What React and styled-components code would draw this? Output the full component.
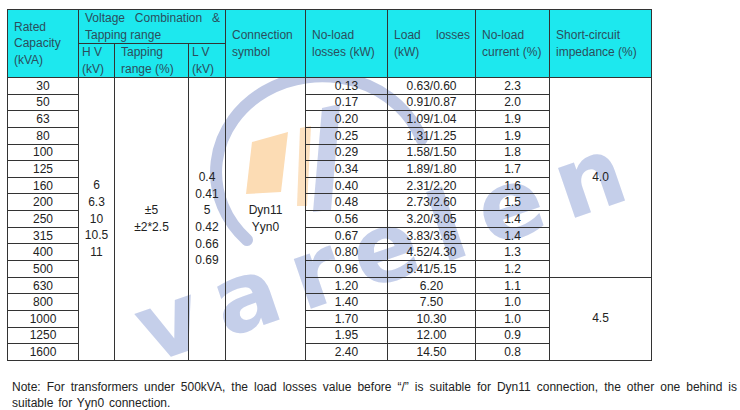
import React from 'react';
import styled, { createGlobalStyle } from 'styled-components';

const GlobalStyle = createGlobalStyle`
  html, body {
    margin: 0;
    padding: 0;
    background: #fff;
  }
  body {
    font-family: "Liberation Sans", Arial, sans-serif;
  }
`;

const Page = styled.div`
  position: relative;
  width: 740px;
  height: 410px;
  overflow: hidden;
  padding: 9px 0 0 7px;
  box-sizing: border-box;
`;

const Watermark = styled.svg`
  position: absolute;
  left: 0;
  top: 0;
  width: 740px;
  height: 410px;
  z-index: 0;
  pointer-events: none;
  opacity: 0.85;
`;

const Table = styled.table`
  position: relative;
  z-index: 1;
  border-collapse: collapse;
  table-layout: fixed;
  width: 644px;
  font-size: 12px;
  color: #222;
`;

const HeadRow = styled.tr`
  height: ${p => p.$h}px;
`;

const BodyRow = styled.tr`
  height: 16.65px;
`;

const Th = styled.th`
  background: #1de8ee;
  color: #2b4e5c;
  font-weight: normal;
  border: 1px solid #333;
  padding: ${p => (p.$narrow ? '0 2px 0 3px' : '0 5px 0 6px')};
  text-align: ${p => (p.$narrow ? 'left' : 'justify')};
  text-align-last: left;
  vertical-align: middle;
  line-height: 16.5px;
`;

const Td = styled.td`
  border: 1px solid #333;
  padding: 0;
  text-align: center;
  vertical-align: middle;
  line-height: 14px;
  white-space: nowrap;
`;

const Merged = styled.td`
  border: 1px solid #333;
  padding: 0;
  text-align: center;
  vertical-align: middle;
  line-height: 16.6px;
`;

const Line = styled.div``;

const Note = styled.p`
  margin: 18px 0 0 5px;
  width: 725px;
  font-size: 12px;
  line-height: 16px;
  word-spacing: 1.5px;
  color: #222;
  text-align: justify;
`;

const rows = [
  ['30', '0.13', '0.63/0.60', '2.3'],
  ['50', '0.17', '0.91/0.87', '2.0'],
  ['63', '0.20', '1.09/1.04', '1.9'],
  ['80', '0.25', '1.31/1.25', '1.9'],
  ['100', '0.29', '1.58/1.50', '1.8'],
  ['125', '0.34', '1.89/1.80', '1.7'],
  ['160', '0.40', '2.31/2.20', '1.6'],
  ['200', '0.48', '2.73/2.60', '1.5'],
  ['250', '0.56', '3.20/3.05', '1.4'],
  ['315', '0.67', '3.83/3.65', '1.4'],
  ['400', '0.80', '4.52/4.30', '1.3'],
  ['500', '0.96', '5.41/5.15', '1.2'],
  ['630', '1.20', '6.20', '1.1'],
  ['800', '1.40', '7.50', '1.0'],
  ['1000', '1.70', '10.30', '1.0'],
  ['1250', '1.95', '12.00', '0.9'],
  ['1600', '2.40', '14.50', '0.8'],
];

const widths = [71, 36, 74, 37, 80, 82, 88, 74, 102];

const Lines = ({ items }) => items.map(t => <Line key={t}>{t}</Line>);

const Logo = () => (
  <Watermark viewBox="0 0 740 410">
    <path
      d="M 421.6 139.2 A 106 96 0 1 0 247 240"
      fill="none"
      stroke="#b4bfe0"
      strokeWidth="12"
      strokeLinecap="round"
    />
    <path d="M 252 142 L 288 132 L 281 192 L 246 194 Z" fill="#fcd6a8" />
    <path d="M 300 128 L 311 126 L 307 206 L 297 206 Z" fill="#fcdcb6" />
    <path d="M 322 108 L 340 104 L 331 210 L 313 212 Z" fill="#c0cae8" />
    <text
      x="150"
      y="364"
      transform="rotate(-19 150 364)"
      fontFamily="DejaVu Sans, sans-serif"
      fontWeight="bold"
      fontSize="96"
      fill="#bcc7e7"
      textLength="510"
      lengthAdjust="spacing"
    >
      varelen
    </text>
  </Watermark>
);

export default function App() {
  return (
    <Page>
      <GlobalStyle />
      <Logo />
      <Table>
        <colgroup>
          {widths.map((w, i) => <col key={i} style={{ width: w }} />)}
        </colgroup>
        <thead>
          <HeadRow $h={32}>
            <Th rowSpan={2}>Rated Capacity (kVA)</Th>
            <Th colSpan={3}>Voltage Combination &amp; Tapping range</Th>
            <Th rowSpan={2}>Connection symbol</Th>
            <Th rowSpan={2}>No-load losses (kW)</Th>
            <Th rowSpan={2}>Load losses (kW)</Th>
            <Th rowSpan={2}>No-load current (%)</Th>
            <Th rowSpan={2}>Short-circuit impedance (%)</Th>
          </HeadRow>
          <HeadRow $h={33}>
            <Th $narrow>H V (kV)</Th>
            <Th>Tapping range (%)</Th>
            <Th $narrow>L V (kV)</Th>
          </HeadRow>
        </thead>
        <tbody>
          {rows.map((r, i) => (
            <BodyRow key={r[0]}>
              <Td>{r[0]}</Td>
              {i === 0 && (
                <>
                  <Merged rowSpan={17}>
                    <Lines items={['6', '6.3', '10', '10.5', '11']} />
                  </Merged>
                  <Merged rowSpan={17}>
                    <Lines items={['±5', '±2*2.5']} />
                  </Merged>
                  <Merged rowSpan={17}>
                    <Lines items={['0.4', '0.41', '5', '0.42', '0.66', '0.69']} />
                  </Merged>
                  <Merged rowSpan={17}>
                    <Lines items={['Dyn11', 'Yyn0']} />
                  </Merged>
                </>
              )}
              <Td>{r[1]}</Td>
              <Td>{r[2]}</Td>
              <Td>{r[3]}</Td>
              {i === 0 && <Merged rowSpan={12}>4.0</Merged>}
              {i === 12 && <Merged rowSpan={5}>4.5</Merged>}
            </BodyRow>
          ))}
        </tbody>
      </Table>
      <Note>
        Note: For transformers under 500kVA, the load losses value before “/” is suitable for Dyn11
        connection, the other one behind is suitable for Yyn0 connection.
      </Note>
    </Page>
  );
}
